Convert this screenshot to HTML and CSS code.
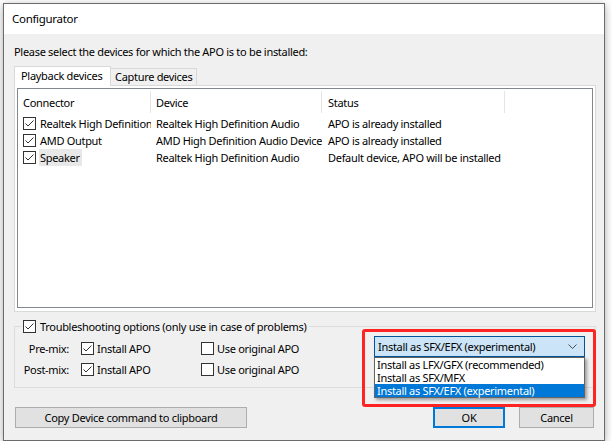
FILE: index.html
```html
<!DOCTYPE html>
<html lang="en">
  <head>
    <meta charset="UTF-8" />
    <title>Configurator</title>
    <link rel="stylesheet" href="styles.css">
  </head>
  <body>
    <div class="window">
      <div class="titlebar">Configurator</div>
      <div class="client">
        <div class="prompt">Please select the devices for which the APO is to be installed:</div>

        <div class="tabs">
          <div class="tab active">Playback devices</div>
          <div class="tab">Capture devices</div>
        </div>
        <div class="tab-panel">
          <div class="list">
            <div class="list-head">
              <div class="col c1">Connector</div>
              <div class="col c2">Device</div>
              <div class="col c3">Status</div>
            </div>
            <div class="row">
              <div class="col c1"><span class="check on"></span>Realtek High Definition</div>
              <div class="col c2">Realtek High Definition Audio</div>
              <div class="col c3">APO is already installed</div>
            </div>
            <div class="row">
              <div class="col c1"><span class="check on"></span>AMD Output</div>
              <div class="col c2">AMD High Definition Audio Device</div>
              <div class="col c3">APO is already installed</div>
            </div>
            <div class="row">
              <div class="col c1"><span class="check on"></span><span class="focus">Speaker</span></div>
              <div class="col c2">Realtek High Definition Audio</div>
              <div class="col c3">Default device, APO will be installed</div>
            </div>
          </div>
        </div>

        <fieldset class="group">
          <legend><span class="check on"></span>Troubleshooting options (only use in case of problems)</legend>
          <div class="mix-grid">
            <div class="mix-label">Pre-mix:</div>
            <div class="opt"><span class="check on"></span>Install APO</div>
            <div class="opt"><span class="check"></span>Use original APO</div>
            <div class="mix-label">Post-mix:</div>
            <div class="opt"><span class="check on"></span>Install APO</div>
            <div class="opt"><span class="check"></span>Use original APO</div>
          </div>
          <div class="combo-wrap">
            <div class="combo">
              <span>Install as SFX/EFX (experimental)</span>
              <svg width="9" height="5" viewBox="0 0 9 5"><polyline points="0.5,0.5 4.5,4.5 8.5,0.5" fill="none" stroke="#4d4d4d" stroke-width="1"/></svg>
            </div>
            <ul class="dropdown">
              <li>Install as LFX/GFX (recommended)</li>
              <li>Install as SFX/MFX</li>
              <li class="selected">Install as SFX/EFX (experimental)</li>
            </ul>
            <div class="highlight"></div>
          </div>
        </fieldset>

        <div class="buttons">
          <button class="btn copy">Copy Device command to clipboard</button>
          <button class="btn ok">OK</button>
          <button class="btn cancel">Cancel</button>
        </div>
      </div>
    </div>
  </body>
</html>
```

FILE: styles.css
```css
* {
  box-sizing: border-box;
}
body {
  margin: 0;
  background: #fff;
  font-family: "Noto Sans", "Liberation Sans", sans-serif;
  font-size: 11px;
  letter-spacing: -0.3px;
  color: #000;
}
.window {
  margin: 3px 0 0 3px;
  width: 602px;
  height: 438px;
  border: 1px solid #6b6b6b;
  background: #f0f0f0;
  box-shadow: 0 2px 8px rgba(0, 0, 0, 0.35);
  display: flex;
  flex-direction: column;
}
.titlebar {
  height: 30px;
  line-height: 30px;
  background: #fff;
  padding-left: 8px;
  font-size: 11.5px;
}
.client {
  flex: 1;
  padding: 10px 8px 0 10px;
  display: flex;
  flex-direction: column;
}
.prompt {
  height: 16px;
  line-height: 16px;
}

/* tabs */
.tabs {
  display: flex;
  align-items: flex-end;
  margin-top: 6px;
  height: 19px;
}
.tab {
  height: 17px;
  line-height: 16px;
  padding: 0 4px;
  border: 1px solid #d9d9d9;
  border-left: none;
  border-bottom: none;
  background: #f0f0f0;
  white-space: nowrap;
}
.tab.active {
  height: 20px;
  line-height: 18px;
  width: 97px;
  padding-left: 6px;
  border-left: 1px solid #d9d9d9;
  background: #fff;
  margin-bottom: -1px;
  position: relative;
  z-index: 1;
}
.tab-panel {
  height: 227px;
  border: 1px solid #d9d9d9;
  background: #fff;
  padding: 2px 2px 3px 2px;
  display: flex;
}
.list {
  flex: 1;
  border: 1px solid #828790;
}
.list-head,
.row {
  display: flex;
}
.list-head {
  height: 26px;
}
.list-head .col {
  padding-top: 4px;
  border-right: 1px solid #e5e5e5;
  margin-top: 2px;
  margin-bottom: 2px;
}
.row {
  height: 17px;
  line-height: 17px;
}
.col {
  white-space: nowrap;
  overflow: hidden;
}
.c1 {
  width: 133px;
  padding-left: 5px;
}
.row .c1 {
  display: flex;
  align-items: center;
}
.c2 {
  width: 171px;
  padding-left: 5px;
}
.c3 {
  width: 183px;
  padding-left: 6px;
}
.focus {
  background: #e8e8e8;
  padding: 0 2px 0 1px;
  margin-left: -1px;
}

/* checkbox */
.check {
  display: inline-block;
  flex: none;
  width: 13px;
  height: 13px;
  border: 1px solid #333;
  background: #fff;
  margin-right: 4px;
}
.check.on {
  background: #fff url("data:image/svg+xml,%3Csvg xmlns='http://www.w3.org/2000/svg' width='11' height='11'%3E%3Cpolyline points='1.5,5.5 4,8 9.5,2.5' fill='none' stroke='%23333' stroke-width='1'/%3E%3C/svg%3E") no-repeat center;
}

/* troubleshooting group */
.group {
  margin: 7px 0 0 0;
  padding: 0 10px 7px 7px;
  border: 1px solid #dcdcdc;
  display: flex;
  align-items: flex-start;
}
.group legend {
  padding: 0 2px 0 1px;
  display: flex;
  align-items: center;
  height: 15px;
}
.mix-grid {
  display: grid;
  grid-template-columns: 47px 108px auto;
  grid-auto-rows: 21px;
  column-gap: 12px;
  align-items: center;
  margin-top: 4px;
  white-space: nowrap;
}
.mix-label {
  text-align: right;
}
.opt {
  display: flex;
  align-items: center;
}
.opt .check {
  margin-right: 3px;
}
.combo-wrap {
  margin-left: auto;
  position: relative;
  width: 211px;
  margin-top: 2px;
}
.combo {
  height: 21px;
  border: 1px solid #005499;
  background: #cce4f7;
  padding: 0 7px 0 3px;
  display: flex;
  align-items: center;
  justify-content: space-between;
}
.dropdown {
  position: absolute;
  top: 100%;
  left: 0;
  right: 0;
  margin: 0;
  padding: 0;
  list-style: none;
  background: #fff;
  border: 1px solid #646464;
  box-shadow: 2px 2px 3px rgba(0, 0, 0, 0.35);
}
.dropdown li {
  height: 13px;
  line-height: 13px;
  padding-left: 2px;
}
.dropdown li.selected {
  background: #0078d7;
  color: #fff;
}
.highlight {
  position: absolute;
  top: -7px;
  left: -12px;
  right: -11px;
  height: 78px;
  border: 3px solid #ff2424;
  border-radius: 3px;
  pointer-events: none;
}

/* buttons */
.buttons {
  display: flex;
  margin-top: 19px;
  padding-right: 2px;
}
.btn {
  height: 21px;
  font: inherit;
  letter-spacing: inherit;
  color: #000;
  background: #e1e1e1;
  border: 1px solid #adadad;
  padding: 0;
}
.copy {
  width: 232px;
  margin-left: 1px;
}
.ok {
  width: 72px;
  margin-left: auto;
  border: 2px solid #0078d7;
}
.cancel {
  width: 75px;
  margin-left: 14px;
}
```
